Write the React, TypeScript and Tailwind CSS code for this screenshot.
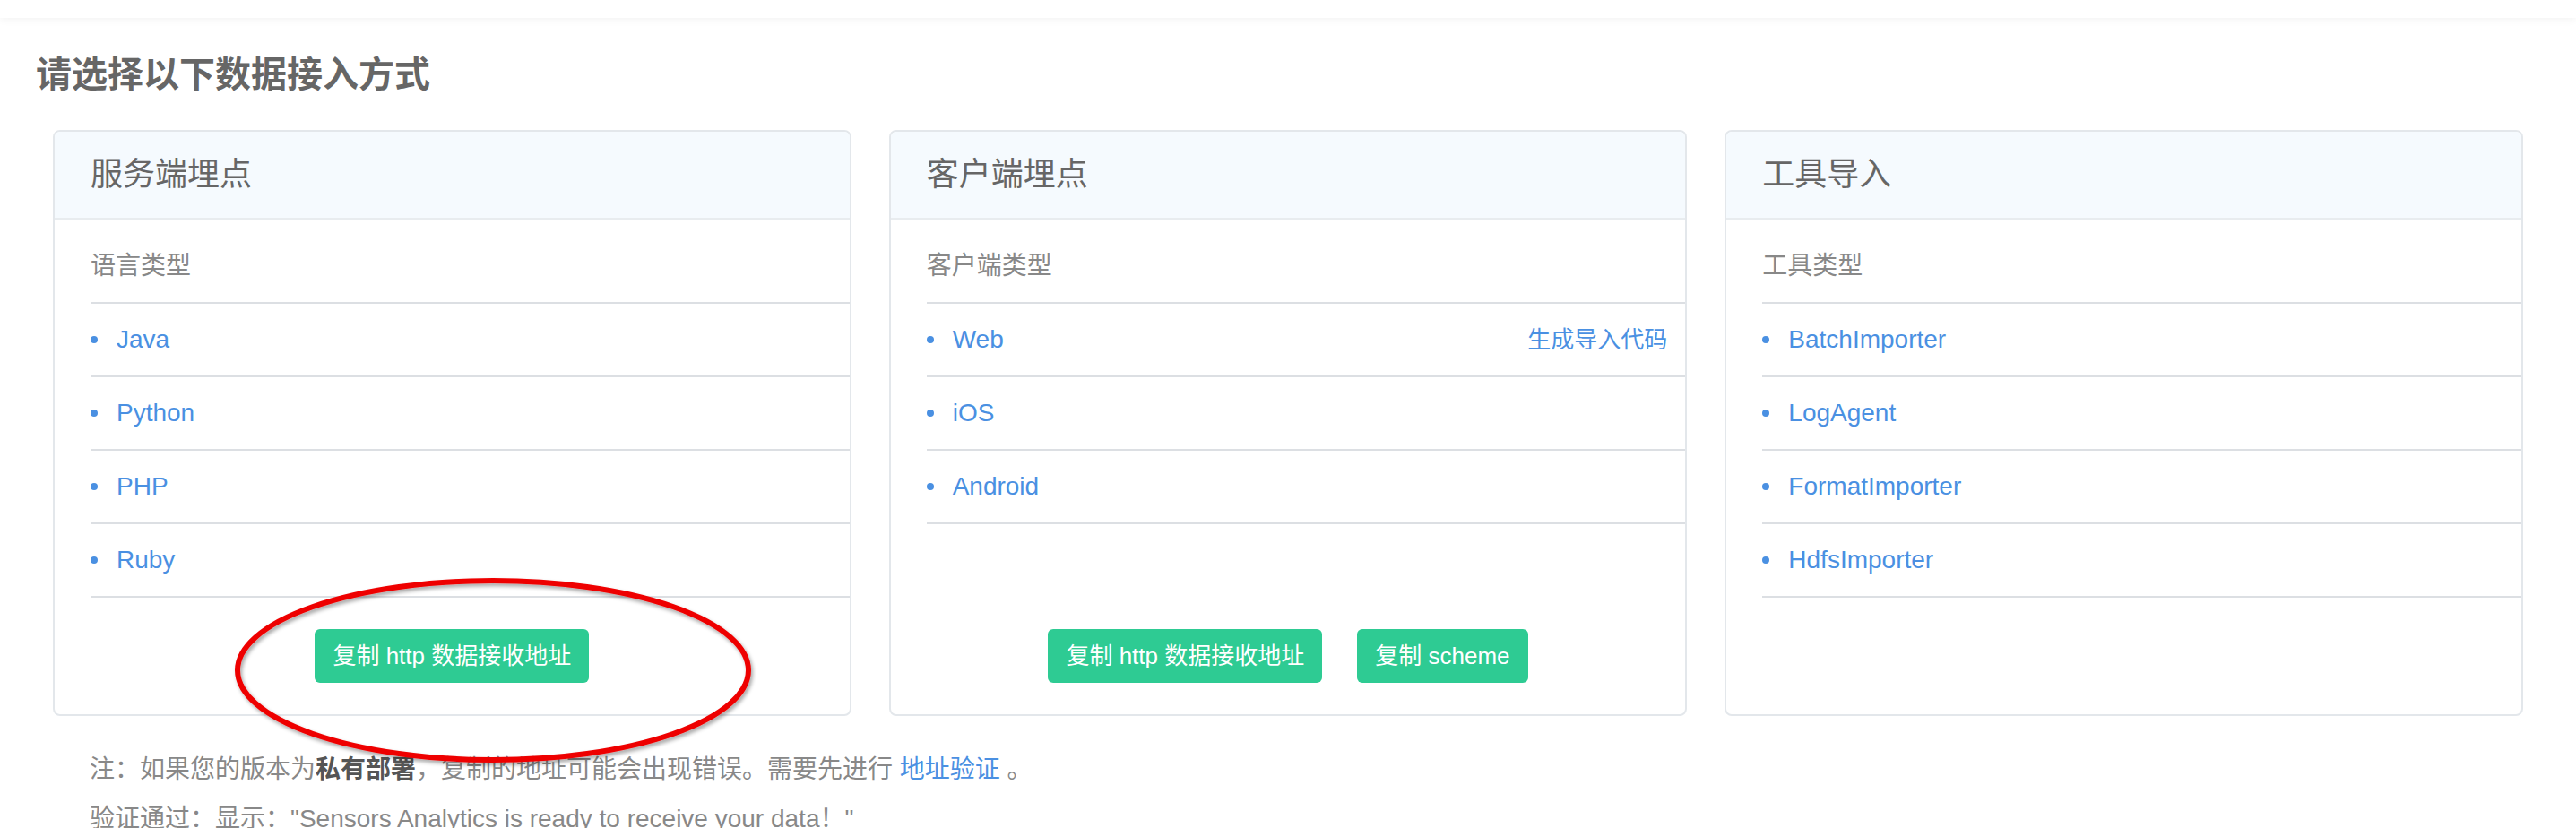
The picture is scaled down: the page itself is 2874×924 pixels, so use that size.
import React from "react";

type CardProps = {
  title: string;
  label: string;
  items: string[];
  action?: string;
  buttons?: string[];
};

function Card({ title, label, items, action, buttons }: CardProps) {
  return (
    <div className="flex flex-col overflow-hidden rounded-[8px] border-2 border-[#e3e7eb] bg-white">
      <div className="flex h-[98px] items-center border-b-2 border-[#e8ecef] bg-[#f5fafe] pl-[40px] text-[36px] text-[#666]">
        {title}
      </div>
      <div className="ml-[40px]">
        <div className="border-b-2 border-[#dcdfe3] pt-[32px] pb-[20px] text-[28px] leading-[40px] text-[#888]">
          {label}
        </div>
        {items.map((it, i) => (
          <div
            key={it}
            className="flex h-[82px] items-center border-b-2 border-[#dcdfe3] pr-[20px]"
          >
            <span className="mr-[21px] h-[8px] w-[8px] rounded-full bg-[#4a90e2]" />
            <span className="text-[28px] text-[#4a90e2]">{it}</span>
            {action && i === 0 && (
              <span className="ml-auto text-[26px] text-[#4a90e2]">{action}</span>
            )}
          </div>
        ))}
      </div>
      {buttons && (
        <div className="mt-auto flex justify-center gap-[39px] py-[35px]">
          {buttons.map((b) => (
            <button
              key={b}
              className="flex h-[60px] items-center rounded-[6px] bg-[#2ecb93] px-[20px] text-[26px] text-white"
            >
              {b}
            </button>
          ))}
        </div>
      )}
    </div>
  );
}

export default function App() {
  return (
    <div className="relative min-h-[924px] overflow-hidden bg-white font-['Liberation_Sans','Noto_Sans_CJK_SC',sans-serif]">
      <div className="relative z-10 h-[20px] bg-white shadow-[0_2px_10px_rgba(0,0,0,0.05)]" />
      <h1 className="pl-[40px] pt-[35px] text-[40px] font-bold leading-[56px] text-[#666]">
        请选择以下数据接入方式
      </h1>
      <div className="mt-[34px] grid grid-cols-3 gap-[42px] px-[59px]">
        <Card
          title="服务端埋点"
          label="语言类型"
          items={["Java", "Python", "PHP", "Ruby"]}
          buttons={["复制 http 数据接收地址"]}
        />
        <Card
          title="客户端埋点"
          label="客户端类型"
          items={["Web", "iOS", "Android"]}
          action="生成导入代码"
          buttons={["复制 http 数据接收地址", "复制 scheme"]}
        />
        <Card
          title="工具导入"
          label="工具类型"
          items={["BatchImporter", "LogAgent", "FormatImporter", "HdfsImporter"]}
        />
      </div>
      <div className="mt-[32px] pl-[100px] text-[28px] leading-[55px] text-[#888]">
        <p>
          注：如果您的版本为<b className="font-bold text-[#555]">私有部署</b>
          ，复制的地址可能会出现错误。需要先进行{" "}
          <a className="text-[#4a90e2]">地址验证</a> 。
        </p>
        <p>验证通过：显示："Sensors Analytics is ready to receive your data！"</p>
      </div>
      <svg
        className="pointer-events-none absolute left-0 top-0"
        width={2874}
        height={924}
        viewBox="0 0 2874 924"
      >
        <defs>
          <filter id="sh" x="-10%" y="-10%" width="120%" height="130%">
            <feDropShadow dx="2" dy="3" stdDeviation="2" floodColor="#000" floodOpacity="0.35" />
          </filter>
        </defs>
        <ellipse
          cx={550}
          cy={748}
          rx={285}
          ry={100}
          fill="none"
          stroke="#ee0000"
          strokeWidth={6}
          filter="url(#sh)"
        />
      </svg>
    </div>
  );
}
